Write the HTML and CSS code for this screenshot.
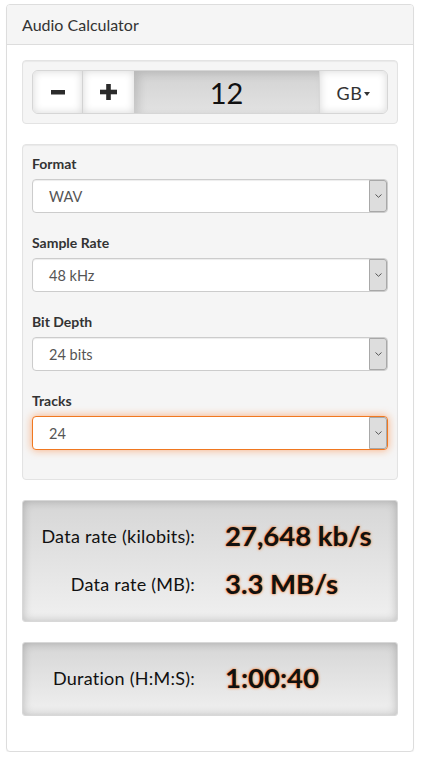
FILE: index.html
```html
<!DOCTYPE html>
<html>
<head>
<meta charset="utf-8">
<link rel="stylesheet" href="styles.css">
</head>
<body>
<div class="wrap">
  <div class="panel">
    <div class="panel-heading">Audio Calculator</div>
    <div class="panel-body">
      <div class="well well-size">
        <div class="input-group">
          <div class="btn btn-minus"><svg width="14" height="5" viewBox="0 0 14 5"><rect x="0" y="0" width="14" height="4.5" fill="#2b2b2b"/></svg></div>
          <div class="btn btn-plus"><svg width="17" height="16" viewBox="0 0 17 16"><rect x="0" y="5.7" width="17" height="4.6" fill="#2b2b2b"/><rect x="6.2" y="0" width="4.6" height="16" fill="#2b2b2b"/></svg></div>
          <div class="size-input">12</div>
          <div class="btn btn-unit">GB<span class="caret"></span></div>
        </div>
      </div>

      <div class="well well-form">
        <div class="form-group">
          <div class="label">Format</div>
          <div class="select"><span class="select-text">WAV</span><span class="select-arrow"><svg width="7" height="4" viewBox="0 0 7 4"><path d="M0.5 0.5 L3.5 3.3 L6.5 0.5" fill="none" stroke="#555" stroke-width="1"/></svg></span></div>
        </div>
        <div class="form-group">
          <div class="label">Sample Rate</div>
          <div class="select"><span class="select-text">48 kHz</span><span class="select-arrow"><svg width="7" height="4" viewBox="0 0 7 4"><path d="M0.5 0.5 L3.5 3.3 L6.5 0.5" fill="none" stroke="#555" stroke-width="1"/></svg></span></div>
        </div>
        <div class="form-group">
          <div class="label">Bit Depth</div>
          <div class="select"><span class="select-text">24 bits</span><span class="select-arrow"><svg width="7" height="4" viewBox="0 0 7 4"><path d="M0.5 0.5 L3.5 3.3 L6.5 0.5" fill="none" stroke="#555" stroke-width="1"/></svg></span></div>
        </div>
        <div class="form-group">
          <div class="label">Tracks</div>
          <div class="select select-focus"><span class="select-text">24</span><span class="select-arrow"><svg width="7" height="4" viewBox="0 0 7 4"><path d="M0.5 0.5 L3.5 3.3 L6.5 0.5" fill="none" stroke="#555" stroke-width="1"/></svg></span></div>
        </div>
      </div>

      <div class="result">
        <div class="result-row">
          <div class="result-label">Data rate (kilobits):</div>
          <div class="result-value">27,648 kb/s</div>
        </div>
        <div class="result-row">
          <div class="result-label">Data rate (MB):</div>
          <div class="result-value">3.3 MB/s</div>
        </div>
      </div>

      <div class="result">
        <div class="result-row">
          <div class="result-label">Duration (H:M:S):</div>
          <div class="result-value">1:00:40</div>
        </div>
      </div>
    </div>
  </div>
</div>
</body>
</html>
```

FILE: styles.css
```css
* { box-sizing: border-box; }
html, body { margin: 0; padding: 0; background: #fff; }
body {
  font-family: Lato, "Open Sans", sans-serif;
  color: #333;
  font-size: 14px;
}
.wrap { padding: 4px 9px 0 6px; }
.panel {
  border: 1px solid #ddd;
  border-radius: 4px;
  background: #fff;
  box-shadow: 0 1px 1px rgba(0,0,0,0.05);
}
.panel-heading {
  background: #f5f5f5;
  border-bottom: 1px solid #ddd;
  border-radius: 3px 3px 0 0;
  padding: 10px 15px 9px;
  font-size: 16px;
  line-height: 20px;
  color: #333;
}
.panel-body { padding: 15px; }
.well {
  background: #f5f5f5;
  border: 1px solid #e3e3e3;
  border-radius: 4px;
  box-shadow: inset 0 1px 1px rgba(0,0,0,0.05);
  padding: 9px;
  margin-bottom: 20px;
}
.input-group {
  display: flex;
  height: 44px;
  border-radius: 6px;
  overflow: hidden;
  border: 1px solid #d6d6d6;
}
.btn {
  display: flex;
  align-items: center;
  justify-content: center;
  background: #fff;
  box-shadow: inset 0 0 9px rgba(0,0,0,0.16);
}
.btn-minus { width: 50px; border-right: 1px solid #d2d2d2; }
.btn-plus { width: 51px; }
.size-input {
  flex: 1;
  display: flex;
  align-items: center;
  justify-content: center;
  background: linear-gradient(#d2d2d2, #e2e2e2);
  box-shadow: inset 5px 3px 8px rgba(0,0,0,0.12);
  font-size: 29px;
  color: #111;
}
.btn-unit {
  width: 68px;
  font-size: 18px;
  letter-spacing: 0.5px;
  color: #333;
  padding-top: 2px;
  border-left: 1px solid #d8d8d8;
}
.caret {
  display: inline-block;
  width: 0; height: 0;
  margin-left: 2px;
  margin-top: 1px;
  border-left: 3.5px solid transparent;
  border-right: 3.5px solid transparent;
  border-top: 4px solid #333;
}
.well-form { padding: 9px; }
.form-group { margin-bottom: 20px; }
.label {
  font-weight: 700;
  font-size: 14px;
  line-height: 20px;
  margin-bottom: 5px;
  color: #333;
}
.select {
  display: flex;
  align-items: stretch;
  height: 34px;
  background: #fff;
  border: 1px solid #ccc;
  border-radius: 4px;
  box-shadow: inset 0 1px 1px rgba(0,0,0,0.075);
}
.select-text {
  flex: 1;
  display: flex;
  align-items: center;
  padding-left: 16px;
  font-size: 14.5px;
  color: #555;
}
.select-arrow {
  width: 18px;
  display: flex;
  align-items: center;
  justify-content: center;
  background: #ddd;
  border: 1px solid #a8a8a8;
  border-radius: 0 3px 3px 0;
}
.select-focus {
  border-color: #f07820;
  box-shadow: 0 0 8px rgba(255,110,20,0.55);
}
.result {
  background: linear-gradient(#d6d6d6, #f0f0f0);
  border: 1px solid #d8d8d8;
  border-radius: 3px;
  box-shadow: inset 0 0 10px rgba(0,0,0,0.22);
  padding: 10px 0 14px;
  margin-bottom: 20px;
}
.result-row {
  display: grid;
  grid-template-columns: 1fr 1fr;
  column-gap: 30px;
  align-items: center;
  height: 48px;
}
.result-label {
  text-align: right;
  font-size: 18px;
  letter-spacing: 0.25px;
  color: #111;
  padding-top: 1px;
}
.result-value {
  font-size: 27.5px;
  font-weight: 700;
  color: #111;
  text-shadow: 0 0 3px rgba(255,110,20,0.9), 0 0 1px rgba(255,110,20,0.9);
}
```
